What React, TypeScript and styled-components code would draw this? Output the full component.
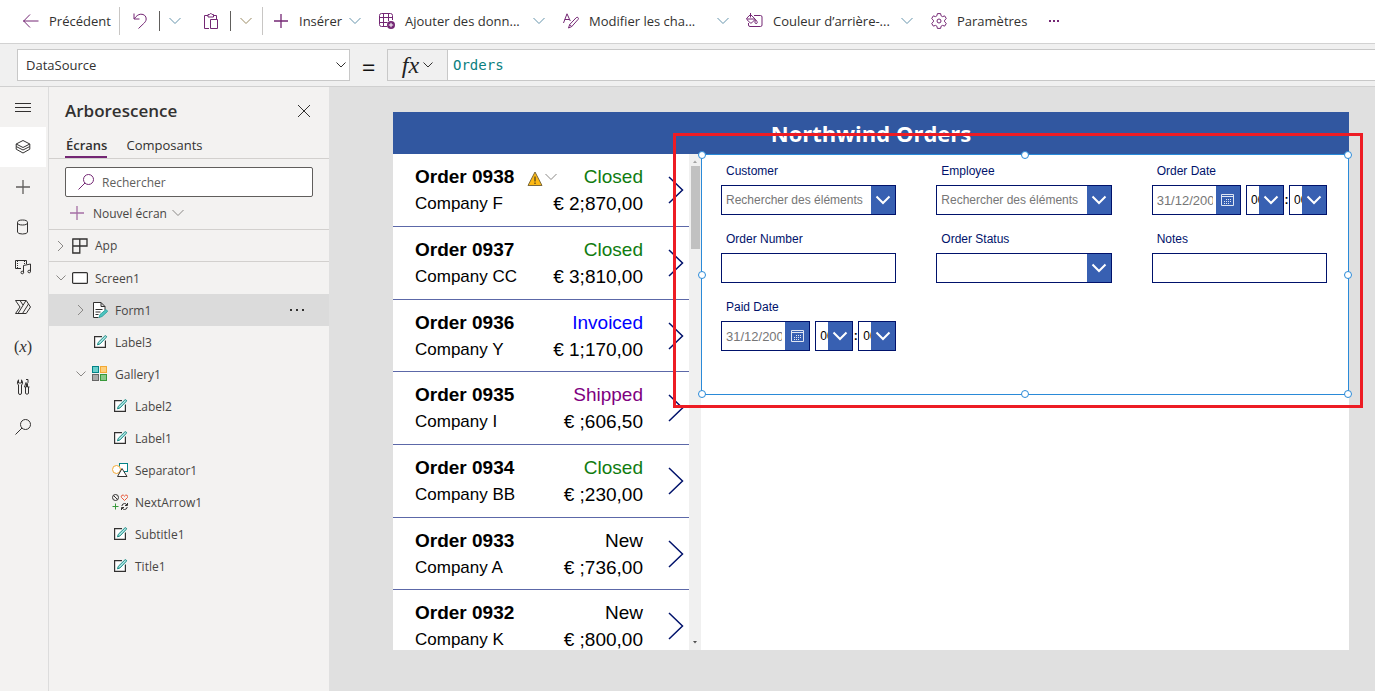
import React from "react";
import styled, { createGlobalStyle, css } from "styled-components";

const UI = `"Open Sans", "Noto Sans", sans-serif`;
const ARIAL = `"Liberation Sans", Arial, sans-serif`;
const PURPLE = "#742774";
const NAVY = "#00126b";
const BLUE = "#3860b2";

const GlobalStyle = createGlobalStyle`
  *, *::before, *::after { box-sizing: border-box; }
  body { margin: 0; font-family: ${UI}; color: #323130; }
  button, input, select { font: inherit; color: inherit; }
  button { padding: 0; border: 0; background: none; cursor: pointer; }
  ul { list-style: none; margin: 0; padding: 0; }
  svg { display: block; flex: none; }
`;

const Shell = styled.div`
  display: flex;
  flex-direction: column;
  height: 100vh;
  background: #e0e0e0;
`;

/* ---------- command bar ---------- */

const CommandBar = styled.header`
  display: flex;
  align-items: center;
  height: 44px;
  flex: none;
  padding: 0 0 2px 23px;
  background: #fff;
  border-bottom: 1px solid #d2d2d2;
  font-size: 13px;
  line-height: 20px;
`;

const Command = styled.button<{ $before?: number }>`
  display: flex;
  align-items: center;
  gap: 10px;
  margin-left: ${(p) => p.$before ?? 0}px;
  color: ${PURPLE};
`;

const CommandText = styled.span<{ $width: number }>`
  width: ${(p) => p.$width}px;
  color: #323130;
  text-align: left;
  white-space: nowrap;
`;

const Rule = styled.span<{ $dark?: boolean; $before: number }>`
  width: 1px;
  height: ${(p) => (p.$dark ? 20 : 28)}px;
  margin-left: ${(p) => p.$before}px;
  background: ${(p) => (p.$dark ? "#605e5c" : "#c8c6c4")};
`;

/* ---------- formula bar ---------- */

const FormulaBar = styled.div`
  display: flex;
  align-items: center;
  height: 43px;
  flex: none;
  padding-left: 17px;
  background: #f0f0f0;
  border-bottom: 1px solid #d0d0d0;
`;

const PropertyPicker = styled.div`
  display: grid;
  align-items: center;
  width: 333px;
  height: 32px;
  background: #fff;
  border: 1px solid #c8c8c8;
  font-size: 13px;
  > * { grid-area: 1 / 1; }
  > svg { justify-self: end; margin-right: 3px; pointer-events: none; }
`;

const PropertySelect = styled.select`
  appearance: none;
  width: 100%;
  height: 100%;
  padding: 0 24px 0 8px;
  border: 0;
  background: transparent;
`;

const Equals = styled.span`
  width: 37px;
  padding-top: 3px;
  text-align: center;
  font-size: 24px;
  line-height: 32px;
  color: #111;
`;

const FxButton = styled.button`
  display: flex;
  align-items: center;
  justify-content: center;
  gap: 4px;
  width: 61px;
  height: 32px;
  border: 1px solid #c8c8c8;
  font-family: "Liberation Serif", serif;
  font-size: 24px;
  font-style: italic;
  color: #222;
`;

const FormulaInput = styled.input`
  flex: 1;
  min-width: 0;
  height: 32px;
  padding: 0 5px;
  border: 1px solid #c8c8c8;
  border-left: 0;
  border-right: 0;
  background: #fff;
  color: #0b8080;
  font-family: "DejaVu Sans Mono", monospace;
  font-size: 14px;
`;

/* ---------- left rail ---------- */

const Body = styled.div`
  display: flex;
  flex: 1;
  min-height: 0;
`;

const Rail = styled.nav`
  display: flex;
  flex-direction: column;
  width: 49px;
  flex: none;
  background: #f3f2f1;
  border-right: 1px solid #dcdcdc;
`;

const RailButton = styled.button<{ $active?: boolean }>`
  display: flex;
  align-items: center;
  justify-content: center;
  width: 46px;
  height: 40px;
  color: #323130;
  background: ${(p) => (p.$active ? "#fff" : "transparent")};
`;

const VariableGlyph = styled.span`
  font-family: "Liberation Serif", serif;
  font-size: 16px;
  line-height: 20px;
  i { font-size: 17px; }
`;

/* ---------- tree panel ---------- */

const TreePanel = styled.aside`
  display: flex;
  flex-direction: column;
  width: 280px;
  flex: none;
  background: #f3f2f1;
  font-size: 12px;
`;

const PanelHead = styled.div`
  display: flex;
  align-items: center;
  justify-content: space-between;
  height: 48px;
  padding: 0 18px 0 16px;
`;

const PanelTitle = styled.h2`
  margin: 0;
  font-size: 17px;
  line-height: 24px;
  font-weight: 600;
`;

const Tabs = styled.div`
  display: flex;
  gap: 18px;
  height: 24px;
  padding-left: 16px;
  border-bottom: 1px solid #d2d0ce;
`;

const Tab = styled.button<{ $active?: boolean }>`
  height: 23px;
  padding: 0 0 2px 1px;
  font-size: 13px;
  line-height: 18px;
  font-weight: ${(p) => (p.$active ? 600 : 400)};
  border-bottom: 2px solid ${(p) => (p.$active ? PURPLE : "transparent")};
`;

const SearchBox = styled.label`
  display: flex;
  align-items: center;
  gap: 8px;
  height: 30px;
  margin: 8px 16px 0;
  padding: 0 12px;
  background: #fff;
  border: 1px solid #605e5c;
  border-radius: 2px;
  color: ${PURPLE};
  input {
    flex: 1;
    min-width: 0;
    padding: 0;
    border: 0;
    outline: 0;
    background: none;
  }
  input::placeholder { color: #605e5c; opacity: 1; }
`;

const NewScreen = styled.button`
  display: flex;
  align-items: center;
  height: 33px;
  padding-left: 20px;
  border-bottom: 1px solid #d2d0ce;
  color: #484644;
  span { margin: 0 5px 0 8px; }
`;

const TreeRow = styled.li<{ $level: number; $selected?: boolean; $ruled?: boolean }>`
  display: flex;
  align-items: center;
  height: 32px;
  padding-left: ${(p) => 6 + p.$level * 20}px;
  padding-right: 24px;
  background: ${(p) => (p.$selected ? "#dbdbdb" : "transparent")};
  ${(p) => p.$ruled && css`border-bottom: 1px solid #d2d0ce;`}
`;

const Twisty = styled.span`
  display: flex;
  justify-content: center;
  width: 12px;
  margin-right: 5px;
`;

const TreeLabel = styled.span`
  flex: 1;
  margin-left: 7px;
  color: #484644;
`;

/* ---------- canvas ---------- */

const Canvas = styled.main`
  display: flex;
  flex: 1;
  min-width: 0;
  padding: 25px 26px 41px 64px;
`;

const AppFrame = styled.div`
  display: flex;
  flex-direction: column;
  flex: 1;
  min-width: 0;
  background: #fff;
  font-family: ${ARIAL};
`;

const AppTitle = styled.h1`
  flex: none;
  margin: 0;
  background: #3157a0;
  color: #fff;
  font-family: ${UI};
  font-size: 22px;
  font-weight: 700;
  line-height: 42px;
  text-align: center;
`;

const AppBody = styled.div`
  display: flex;
  flex: 1;
  min-height: 0;
`;

const Gallery = styled.section`
  display: flex;
  width: 308px;
  flex: none;
  overflow: hidden;
`;

const OrderList = styled.ul`
  flex: 1;
`;

const OrderRow = styled.li`
  display: flex;
  align-items: center;
  height: 73px;
  padding: 0 5px 0 22px;
  border-bottom: 1px solid #5c68a8;
  color: #000;
  &:nth-child(3n + 3) { height: 72px; }
`;

const OrderText = styled.div`
  flex: 1;
`;

const OrderLine = styled.div`
  display: flex;
  align-items: center;
  justify-content: space-between;
  font-size: 19px;
  line-height: 27px;
`;

const OrderNumber = styled.div`
  display: flex;
  align-items: center;
  gap: 2px;
  padding-top: 0;
  strong { margin-right: 11px; }
`;

const Company = styled.span`
  font-size: 17px;
`;

const Status = styled.span<{ $color: string }>`
  color: ${(p) => p.$color};
`;

const OpenOrder = styled.button`
  margin-left: 25px;
  color: ${NAVY};
`;

const ScrollTrack = styled.div`
  display: flex;
  flex-direction: column;
  align-items: center;
  width: 12px;
  flex: none;
  background: #f0f0f0;
  padding: 6px 0;
`;

const ScrollThumb = styled.div`
  width: 9px;
  height: 83px;
  margin: 3px 0 auto;
  background: #c1c1c1;
`;

/* ---------- edit form ---------- */

const FormArea = styled.section`
  flex: 1;
  min-width: 0;
`;

const EditForm = styled.form`
  position: relative;
  display: grid;
  grid-template-columns: repeat(3, 1fr);
  padding: 0 2px 37px 0;
  font-size: 12px;
  color: ${NAVY};
`;

const Card = styled.div`
  height: 68px;
  padding: 7px 20px 0;
`;

const CardLabel = styled.label`
  display: block;
  height: 24px;
  padding-left: 5px;
  line-height: 20px;
`;

const Field = styled.div`
  display: flex;
  height: 30px;
  border: 1px solid ${NAVY};
  background: #fff;
`;

const FieldInput = styled.input<{ $date?: boolean }>`
  flex: 1;
  width: 100%;
  min-width: 0;
  padding: 0 3px 0 4px;
  border: 0;
  outline: 0;
  background: none;
  font-size: ${(p) => (p.$date ? 13 : 12)}px;
  &::placeholder { color: #767676; opacity: 1; }
`;

const FieldButton = styled.button`
  display: flex;
  align-items: center;
  justify-content: center;
  width: 24px;
  flex: none;
  background: ${BLUE};
  color: #fff;
`;

const DateParts = styled.div`
  display: grid;
  grid-template-columns: 1fr 38px 5px 38px;
  align-items: center;
  > :first-child { margin-right: 5px; }
`;

const Colon = styled.span`
  font-weight: 700;
  text-align: center;
  color: #000;
`;

const TimeField = styled.div`
  display: grid;
  height: 30px;
  border: 1px solid ${NAVY};
  color: #000;
  > * { grid-area: 1 / 1; min-width: 0; }
  select {
    appearance: none;
    width: 100%;
    padding: 0 0 0 4px;
    border: 0;
    background: #fff;
  }
`;

const TimeArrow = styled.span`
  display: flex;
  align-items: center;
  justify-content: center;
  justify-self: end;
  width: 24px;
  background: ${BLUE};
  color: #fff;
  pointer-events: none;
`;

/* ---------- selection overlays ---------- */

const Selection = styled.div`
  position: absolute;
  inset: 0;
  border: 1px solid #2a8ad8;
  pointer-events: none;
`;

const Handle = styled.span<{ $x: string; $y: string }>`
  position: absolute;
  left: ${(p) => p.$x};
  top: ${(p) => p.$y};
  width: 8px;
  height: 8px;
  margin: -4px;
  border: 1px solid #2a8ad8;
  border-radius: 50%;
  background: #fff;
`;

const Highlight = styled.div`
  position: absolute;
  inset: -21px -14px -13px -28px;
  border: 3px solid #ed1c24;
  pointer-events: none;
`;

/* ---------- icons ---------- */

type IconProps = { children: React.ReactNode; w?: number; h?: number; sw?: number; color?: string };
const Icon = ({ children, w = 16, h = 16, sw = 1, color = "currentColor" }: IconProps) => (
  <svg width={w} height={h} viewBox={`0 0 ${w} ${h}`} fill="none" stroke={color} strokeWidth={sw} aria-hidden="true">
    {children}
  </svg>
);

const ChevronDown = ({ color = "#6593ab" }: { color?: string }) => (
  <Icon w={12} h={8} color={color}><path d="M.5 1 6 6.5 11.5 1" /></Icon>
);
const SmallChevron = ({ color = "#323130" }: { color?: string }) => (
  <Icon w={10} h={6} color={color}><path d="M.5.5 5 5 9.5.5" /></Icon>
);
const RightChevron = () => <Icon w={8} h={12} color="#8a8886"><path d="M1 1l5 5-5 5" /></Icon>;
const WideChevron = () => <Icon w={16} h={10} sw={2}><path d="M1.5 1.5 8 8l6.500-6.500" /></Icon>;
const BackIcon = () => <Icon><path d="M0 8h15.500M7 1.500.7 8 7 14.500" /></Icon>;
const UndoIcon = () => (
  <Icon><path d="M2 .500v5.500h5.500M2.200 5.800C4.200 3.200 6 1.400 8.800 1.200c3.200-.2 5.500 2 5.400 4.800-.1 2.200-1.400 3.500-3 5L6.500 15.500" /></Icon>
);
const PasteIcon = () => (
  <Icon>
    <path d="M6 15.500H1.500v-13H5M10.500 2.500h3V6M5 1.500h1.500q.5-1 1.300-1t1.300 1h1.400v2.500H5zM7.500 6.500h7v9h-7z" />
  </Icon>
);
const PlusIcon = ({ color }: { color?: string }) => (
  <Icon color={color}><path d="M8 1v14M1 8h14" strokeWidth="1.300" /></Icon>
);
const DataIcon = () => (
  <Icon>
    <path d="M8 13.500H2.500q-2 0-2-2v-9q0-2 2-2h9q2 0 2 2V7M.5 4.500h13M.5 9.500h8M4.500.500v13M9.500 .5V8" />
    <circle cx="12" cy="12" r="4" fill="currentColor" stroke="none" />
    <path d="M12 9.800v4.400M9.800 12h4.400" stroke="#fff" />
  </Icon>
);
const FontsIcon = () => (
  <Icon>
    <path d="M.5 10 4 .8 7.300 8M1.800 6.500h4.600M5.500 15l1.200-3.500 6.500-6.800q1-.9 1.900 0 .8.900-.1 1.800L8.800 13.500zM6.700 11.500l2 2" />
  </Icon>
);
const PaintIcon = () => (
  <Icon w={17}>
    <path d="M2.500 10v2q0 1.500 1.500 1.500h10.500q1.500 0 1.500-1.500V4q0-1.500-1.500-1.500H8" />
    <path d="M4.500 1.500.9 5q-.8.800 0 1.600l3.300 3.200q.8.700 1.600 0l3.500-3.600zM1 6h8M4.500-.500v5" />
    <path d="M9.500 6.500q1.800 2 1.800 3t-1.200 1-1.200-1.200l.5-2.800" />
  </Icon>
);
const GearIcon = () => (
  <Icon>
    <path d="M6.400.600h3.200l.5 2.200 1.400.8 2.200-.7 1.600 2.700-1.700 1.600v1.600l1.700 1.600-1.600 2.700-2.200-.7-1.400.8-.5 2.200H6.400l-.5-2.200-1.400-.8-2.200.7L.7 10.400l1.700-1.600V7.200L.7 5.600l1.600-2.700 2.200.7 1.400-.8z" />
    <circle cx="8" cy="8" r="2" />
  </Icon>
);
const DotsIcon = ({ w = 12, gap = 4 }: { w?: number; gap?: number }) => (
  <Icon w={w} h={4}>
    {[0, 1, 2].map((i) => (
      <rect key={i} x={1 + i * gap} y={1} width={2} height={2} fill="currentColor" stroke="none" />
    ))}
  </Icon>
);
const MenuIcon = () => <Icon><path d="M0 4.500h16M0 8.500h16M0 12.500h16" /></Icon>;
const LayersIcon = () => (
  <Icon>
    <path d="M8 1.500 14.800 5 8 8.500 1.200 5zM1.200 5v2.500L8 11l6.800-3.500V5M1.200 7.500v2.700L8 14l6.800-3.800V7.500" />
  </Icon>
);
const DatabaseIcon = () => (
  <Icon><ellipse cx="7.500" cy="3.500" rx="5" ry="2.500" /><path d="M2.500 3.500v9.500q0 2 5 2t5-2V3.500" /></Icon>
);
const MediaIcon = () => (
  <Icon>
    <path d="M6 9.500H.5v-8h11V5M8.500 13.500V6.500L15.500 5v7.500" />
    <path d="M2.500 2v8M9.500 2v3" strokeDasharray="1 1" />
    <circle cx="7.300" cy="13.500" r="1.300" /><circle cx="14.200" cy="12.500" r="1.300" />
  </Icon>
);
const FlowIcon = () => (
  <Icon>
    <path d="M.5 1.500h10.700L15.500 8l-4.300 6.500H.500L5 8zM5 1.500 8 6M11 1.500 3 14.500M13.500 5 7.500 14.500" />
  </Icon>
);
const ToolsIcon = () => (
  <Icon>
    <path d="M3.500 6v8q0 1.500 1.500 1.500t1.500-1.500V6q1.500-1 1-3L6.500.800V4h-3V.8L2.500 3q-.5 2 1 3z" />
    <path d="M11 .500h2v3l-.5 1V8h2M9.500 8h2V4.500l-.5-1zM10.500 8v6.500q1.500 1.500 3 0V8" />
  </Icon>
);
const SearchIcon = () => (
  <Icon><circle cx="10.500" cy="5.500" r="5" /><path d="M7 9 .5 15.500" /></Icon>
);
const CloseIcon = () => <Icon w={14} h={14}><path d="M1 1l12 12M13 1 1 13" /></Icon>;

const AppIcon = () => <Icon><path d="M.5 1h14.500v7H1M.8.500v14.500h7V.500M.5 15h7" strokeWidth="1.300" /></Icon>;
const ScreenIcon = () => <Icon><rect x=".6" y="2.600" width="14.800" height="10.800" rx="1" fill="#fff" strokeWidth="1.200" /></Icon>;
const FormIcon = () => (
  <Icon>
    <path d="M6.500 15.500h-5V.500H9l4 4V8M9 .500v4h4" fill="#fff" />
    <path d="M3.500 7.500h7M3.500 10h5M3.500 12.500h3" />
    <path d="m7 15.500 1-3 6-5 1.700 1.800-5.700 5.200z" fill="#4cc4c0" stroke="#35a5a0" />
  </Icon>
);
const LabelIcon = () => (
  <Icon>
    <path d="M10 2.600H2.600v10.800h10.800V6.500" strokeWidth="1.200" fill="#fff" />
    <path d="m5.500 10.800.8-2.500L12.800 2q.8-.6 1.400 0t0 1.400L8 9.900z" fill="#b5eae8" stroke="#10857f" />
  </Icon>
);
const GalleryIcon = () => (
  <Icon>
    <rect x=".5" y=".5" width="6" height="6" fill="#69cfcc" stroke="#038387" />
    <rect x="8.500" y=".5" width="6" height="6" fill="#ffcf7a" stroke="#f2a935" />
    <rect x=".5" y="8.500" width="6" height="6" fill="#aaa" stroke="#666" />
    <rect x="8.500" y="8.500" width="6" height="6" fill="#89c989" stroke="#37993a" />
  </Icon>
);
const ShapesIcon = () => (
  <Icon>
    <rect x="7.500" y="1.500" width="8" height="8" fill="#fff" stroke="#038387" />
    <circle cx="4.500" cy="7.500" r="4" fill="#fff" stroke="#f2a935" />
    <path d="M10 6.500 5.500 14.500h9.500z" fill="#fff" />
  </Icon>
);
const SymbolsIcon = () => (
  <Icon>
    <circle cx="3.500" cy="3.500" r="3" /><path d="M1.500 1.500l4 4" />
    <path d="M12.500 6.500 9.500 3.500q-.8-1.500.5-2.300 1.500-.6 2.500 1 1-1.600 2.500-1 1.300.8.500 2.300z" stroke="#e8593a" />
    <path d="M3.500 9.500v6M.5 12.500h6" stroke="#37993a" />
    <path d="M9.800 12q.5-2.500 2.800-2.500 1.500 0 2.400 1.500M15.500 9v2.500H13M15.300 13q-.5 2.500-2.800 2.500-1.500 0-2.400-1.500M9.500 16v-2.500H12" />
  </Icon>
);
const WarningIcon = () => (
  <Icon h={20}><path d="M8 5 15 18.500H1z" fill="#fdb913" stroke="#7c6a3c" /><path d="M8 9.500v5M8 15.500v1.500" stroke="#222" /></Icon>
);
const OpenArrow = () => <Icon w={16} h={28} sw={1.500}><path d="M1 1l13.500 13L1 27" /></Icon>;
const CalendarIcon = () => (
  <Icon w={13} h={12}>
    <g opacity=".85">
      <path d="M.5.500h12v11H.500zM.5 2.500h12" />
      <path d="M5 5.500h6M3 7.500h8M3 9.500h6" strokeDasharray="1 1" />
    </g>
  </Icon>
);
const ScrollArrow = ({ down }: { down?: boolean }) => (
  <Icon w={6} h={3}>
    <path d={down ? "M1 0h4L3 2.500z" : "M1 3h4L3 .5z"} fill={down ? "#505050" : "#a3a3a3"} stroke="none" />
  </Icon>
);

/* ---------- data ---------- */

const orders = [
  { id: "0938", company: "Company F", status: "Closed", total: "€ 2;870,00" },
  { id: "0937", company: "Company CC", status: "Closed", total: "€ 3;810,00" },
  { id: "0936", company: "Company Y", status: "Invoiced", total: "€ 1;170,00" },
  { id: "0935", company: "Company I", status: "Shipped", total: "€ ;606,50" },
  { id: "0934", company: "Company BB", status: "Closed", total: "€ ;230,00" },
  { id: "0933", company: "Company A", status: "New", total: "€ ;736,00" },
  { id: "0932", company: "Company K", status: "New", total: "€ ;800,00" },
];

const statusColors: Record<string, string> = {
  Closed: "#107c10",
  Invoiced: "#0000ff",
  Shipped: "#800080",
  New: "#000",
};

type Node = { name: string; level: number; icon: React.ReactNode; open?: boolean; selected?: boolean; ruled?: boolean };
const tree: Node[] = [
  { name: "App", level: 0, icon: <AppIcon />, open: false, ruled: true },
  { name: "Screen1", level: 0, icon: <ScreenIcon />, open: true },
  { name: "Form1", level: 1, icon: <FormIcon />, open: false, selected: true },
  { name: "Label3", level: 1, icon: <LabelIcon /> },
  { name: "Gallery1", level: 1, icon: <GalleryIcon />, open: true },
  { name: "Label2", level: 2, icon: <LabelIcon /> },
  { name: "Label1", level: 2, icon: <LabelIcon /> },
  { name: "Separator1", level: 2, icon: <ShapesIcon /> },
  { name: "NextArrow1", level: 2, icon: <SymbolsIcon /> },
  { name: "Subtitle1", level: 2, icon: <LabelIcon /> },
  { name: "Title1", level: 2, icon: <LabelIcon /> },
];

const railItems = [
  { name: "Menu", icon: <MenuIcon /> },
  { name: "Arborescence", icon: <LayersIcon />, active: true },
  { name: "Insérer", icon: <PlusIcon color="#605e5c" /> },
  { name: "Données", icon: <DatabaseIcon /> },
  { name: "Média", icon: <MediaIcon /> },
  { name: "Flux", icon: <FlowIcon /> },
  { name: "Variables", icon: <VariableGlyph>(<i>x</i>)</VariableGlyph> },
  { name: "Outils", icon: <ToolsIcon /> },
  { name: "Rechercher", icon: <SearchIcon /> },
];

const handles = ["0%", "50%", "100%"].flatMap((x) =>
  ["0%", "50%", "100%"].filter((y) => x !== "50%" || y !== "50%").map((y) => ({ x, y }))
);

/* ---------- form cards ---------- */

const ComboCard = ({ id, label, placeholder }: { id: string; label: string; placeholder?: string }) => (
  <Card>
    <CardLabel htmlFor={id}>{label}</CardLabel>
    <Field>
      <FieldInput id={id} placeholder={placeholder} />
      <FieldButton type="button" aria-label={label}><WideChevron /></FieldButton>
    </Field>
  </Card>
);

const TextCard = ({ id, label }: { id: string; label: string }) => (
  <Card>
    <CardLabel htmlFor={id}>{label}</CardLabel>
    <Field><FieldInput id={id} /></Field>
  </Card>
);

const TimeSelect = ({ label }: { label: string }) => (
  <TimeField>
    <select aria-label={label}><option>00</option></select>
    <TimeArrow><WideChevron /></TimeArrow>
  </TimeField>
);

const DateCard = ({ id, label }: { id: string; label: string }) => (
  <Card>
    <CardLabel htmlFor={id}>{label}</CardLabel>
    <DateParts>
      <Field>
        <FieldInput id={id} $date placeholder="31/12/2001" />
        <FieldButton type="button" aria-label={label}><CalendarIcon /></FieldButton>
      </Field>
      <TimeSelect label="Heure" />
      <Colon>:</Colon>
      <TimeSelect label="Minute" />
    </DateParts>
  </Card>
);

export default function App() {
  return (
    <Shell>
      <GlobalStyle />
      <CommandBar>
        <Command><BackIcon /><CommandText $width={62}>Précédent</CommandText></Command>
        <Rule $before={8} />
        <Command $before={12} aria-label="Annuler"><UndoIcon /></Command>
        <Rule $dark $before={11} />
        <Command $before={9} aria-label="Options d’annulation"><ChevronDown /></Command>
        <Command $before={22} aria-label="Coller"><PasteIcon /></Command>
        <Rule $dark $before={11} />
        <Command $before={9} aria-label="Options de collage"><ChevronDown color="#9a8a63" /></Command>
        <Rule $before={10} />
        <Command $before={10}><PlusIcon /><CommandText $width={40}>Insérer</CommandText><ChevronDown /></Command>
        <Command $before={18}><DataIcon /><CommandText $width={118}>Ajouter des donn...</CommandText><ChevronDown /></Command>
        <Command $before={18}><FontsIcon /><CommandText $width={118}>Modifier les cha...</CommandText><ChevronDown /></Command>
        <Command $before={17}><PaintIcon /><CommandText $width={118}>Couleur d’arrière-...</CommandText><ChevronDown /></Command>
        <Command $before={18}><GearIcon /><CommandText $width={70}>Paramètres</CommandText></Command>
        <Command $before={21} aria-label="Plus"><DotsIcon /></Command>
      </CommandBar>

      <FormulaBar>
        <PropertyPicker>
          <PropertySelect aria-label="Propriété"><option>DataSource</option></PropertySelect>
          <SmallChevron />
        </PropertyPicker>
        <Equals>=</Equals>
        <FxButton type="button">fx<SmallChevron /></FxButton>
        <FormulaInput aria-label="Formule" defaultValue="Orders" />
      </FormulaBar>

      <Body>
        <Rail>
          {railItems.map((item) => (
            <RailButton key={item.name} $active={item.active} aria-label={item.name}>{item.icon}</RailButton>
          ))}
        </Rail>

        <TreePanel>
          <PanelHead>
            <PanelTitle>Arborescence</PanelTitle>
            <button aria-label="Fermer"><CloseIcon /></button>
          </PanelHead>
          <Tabs>
            <Tab $active>Écrans</Tab>
            <Tab>Composants</Tab>
          </Tabs>
          <SearchBox><SearchIcon /><input placeholder="Rechercher" aria-label="Rechercher" /></SearchBox>
          <NewScreen><PlusIcon color="#a56fa5" /><span>Nouvel écran</span><ChevronDown color="#8a8886" /></NewScreen>
          <ul>
            {tree.map((n) => (
              <TreeRow key={n.name} $level={n.level} $selected={n.selected} $ruled={n.ruled}>
                <Twisty>
                  {n.open === true && <SmallChevron color="#8a8886" />}
                  {n.open === false && <RightChevron />}
                </Twisty>
                {n.icon}
                <TreeLabel>{n.name}</TreeLabel>
                {n.selected && <button aria-label="Options"><DotsIcon w={16} gap={6} /></button>}
              </TreeRow>
            ))}
          </ul>
        </TreePanel>

        <Canvas>
          <AppFrame>
            <AppTitle>Northwind Orders</AppTitle>
            <AppBody>
              <Gallery>
                <OrderList>
                  {orders.map((o, i) => (
                    <OrderRow key={o.id}>
                      <OrderText>
                        <OrderLine>
                          <OrderNumber>
                            <strong>Order {o.id}</strong>
                            {i === 0 && <><WarningIcon /><ChevronDown color="#8a8886" /></>}
                          </OrderNumber>
                          <Status $color={statusColors[o.status]}>{o.status}</Status>
                        </OrderLine>
                        <OrderLine><Company>{o.company}</Company><span>{o.total}</span></OrderLine>
                      </OrderText>
                      <OpenOrder aria-label={`Order ${o.id}`}><OpenArrow /></OpenOrder>
                    </OrderRow>
                  ))}
                </OrderList>
                <ScrollTrack><ScrollArrow /><ScrollThumb /><ScrollArrow down /></ScrollTrack>
              </Gallery>

              <FormArea>
                <EditForm>
                  <ComboCard id="customer" label="Customer" placeholder="Rechercher des éléments" />
                  <ComboCard id="employee" label="Employee" placeholder="Rechercher des éléments" />
                  <DateCard id="order-date" label="Order Date" />
                  <TextCard id="order-number" label="Order Number" />
                  <ComboCard id="order-status" label="Order Status" />
                  <TextCard id="notes" label="Notes" />
                  <DateCard id="paid-date" label="Paid Date" />
                  <Selection>
                    {handles.map((h) => <Handle key={h.x + h.y} $x={h.x} $y={h.y} />)}
                  </Selection>
                  <Highlight />
                </EditForm>
              </FormArea>
            </AppBody>
          </AppFrame>
        </Canvas>
      </Body>
    </Shell>
  );
}
